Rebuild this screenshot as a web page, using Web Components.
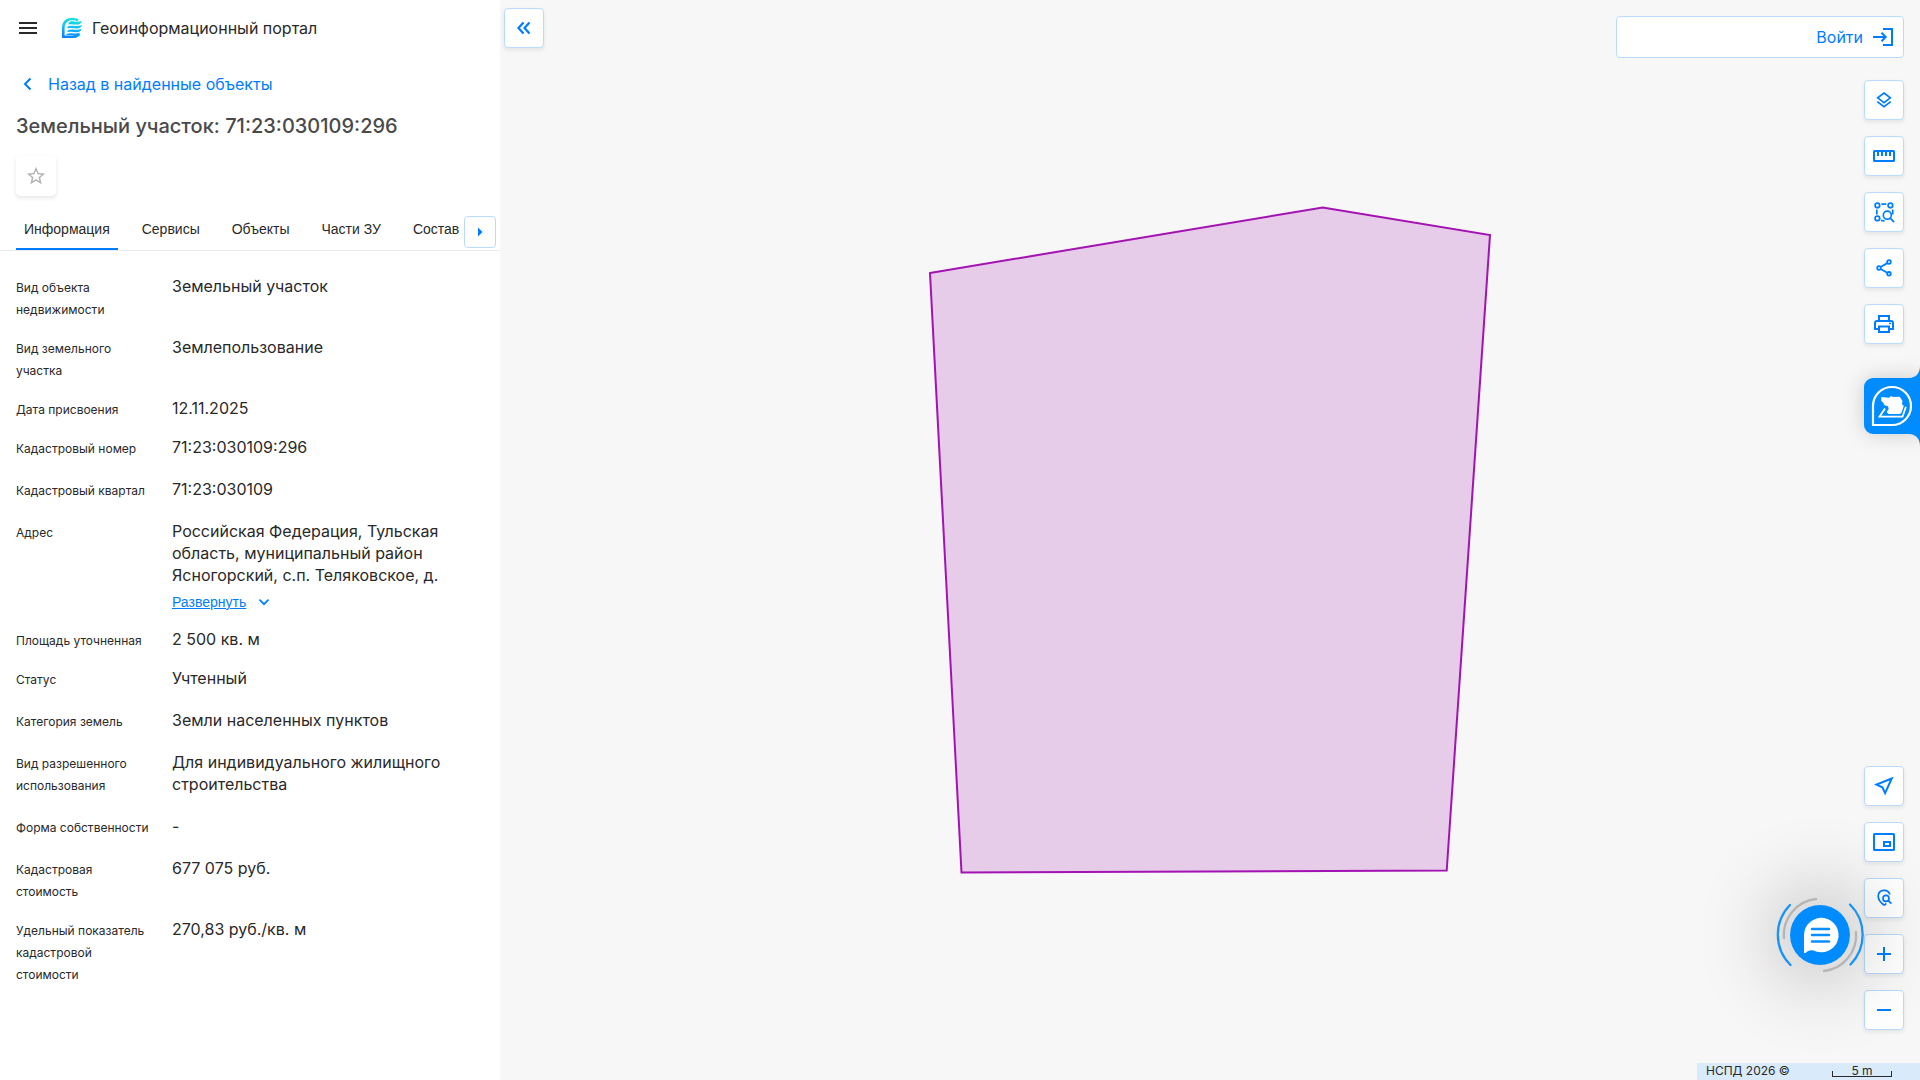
<!DOCTYPE html>
<html lang="ru">
<head>
<meta charset="utf-8">
<title>Геоинформационный портал</title>
<style>
  html, body { margin: 0; height: 100%; }
  body { font: 16px/22px Inter, "Liberation Sans", sans-serif; color: #292929; background: #f7f7f7; }
</style>
</head>
<body>
<gp-app>
  <gp-panel slot="panel">
    <gp-field label="Вид объекта недвижимости">Земельный участок</gp-field>
    <gp-field label="Вид земельного участка">Землепользование</gp-field>
    <gp-field label="Дата присвоения">12.11.2025</gp-field>
    <gp-field label="Кадастровый номер" roomy>71:23:030109:296</gp-field>
    <gp-field label="Кадастровый квартал" roomy>71:23:030109</gp-field>
    <gp-field label="Адрес">Российская Федерация, Тульская область, муниципальный район Ясногорский, с.п. Теляковское, д.<gp-expand slot="more">Развернуть</gp-expand></gp-field>
    <gp-field label="Площадь уточненная">2 500 кв. м</gp-field>
    <gp-field label="Статус" roomy>Учтенный</gp-field>
    <gp-field label="Категория земель" roomy>Земли населенных пунктов</gp-field>
    <gp-field label="Вид разрешенного использования" roomy>Для индивидуального жилищного строительства</gp-field>
    <gp-field label="Форма собственности" roomy>-</gp-field>
    <gp-field label="Кадастровая стоимость">677 075 руб.</gp-field>
    <gp-field label="Удельный показатель кадастровой стоимости">270,83 руб./кв. м</gp-field>
  </gp-panel>
  <gp-map slot="map"></gp-map>
</gp-app>

<script>
const icons = {
  collapse: '<path d="M11.5 6.5 6.5 12l5 5.5M17.5 6.5l-5 5.5 5 5.5" stroke-width="2.2"/>',
  next: '<path d="M10 7.500l4.500 4.500-4.500 4.500z" fill="currentColor" stroke="none"/>',
  star: '<path fill="currentColor" stroke="none" d="M22 9.24l-7.19-.62L12 2 9.19 8.63 2 9.24l5.46 4.73L5.82 21 12 17.27 18.18 21l-1.63-7.03L22 9.24zM12 15.4l-3.76 2.27 1-4.28-3.32-2.88 4.38-.38L12 6.1l1.71 4.04 4.38.38-3.32 2.88 1 4.28L12 15.4z"/>',
  layers: '<path d="M12 5l6.3 4.8-6.3 4.9-6.3-4.9zM5.2 13.6l6.8 5.2 6.8-5.2" stroke-width="1.7"/>',
  ruler: '<rect x="2" y="7" width="20" height="10" rx=".6"/><path d="M6 7v5M10 7v5M14 7v5M18 7v5"/>',
  area: '<g stroke-width="1.7"><circle cx="5.4" cy="5.4" r="2.3"/><circle cx="18.4" cy="5.4" r="2.3"/><circle cx="5.4" cy="18.4" r="2.3"/><path d="M9.3 4.2h5M4.8 9.5v5M9 20.3l3.6.7M20.7 9.4v5"/><circle cx="15.3" cy="15.2" r="4"/><path d="M18.2 18.2l3.9 4"/></g>',
  share: '<g stroke-width="1.8"><circle cx="17" cy="6" r="1.8"/><circle cx="7" cy="12" r="1.8"/><circle cx="17" cy="17.8" r="1.8"/><path d="M8.6 11l6.700-3.900M8.600 13l6.700 3.800"/></g>',
  print: '<path d="M7 8V4h10v4M6.500 17H3v-6a2 2 0 0 1 2-2h14a2 2 0 0 1 2 2v6h-3.500M7 14.500h10V20H7z"/><path d="M17 11.500h2" stroke-width="1.500"/>',
  locate: '<path d="M19.700 4.500 4.500 10.600l5.900 2.700 2.700 5.900z"/>',
  overview: '<rect x="2" y="4" width="20" height="16" rx=".6"/><path d="M12 12h6v4h-6z"/>',
  find: '<g stroke-width="1.700"><path d="M12.400 19.300C8.700 16.700 6.200 13.600 6.200 10.200a6 6 0 0 1 11.700-1.700M14.200 17.400l-1.800 1.900"/><circle cx="14" cy="12.400" r="3"/><path d="M16.200 14.700l3.300 3"/></g>',
  plus: '<path d="M5 12h14M12 5v14"/>',
  minus: '<path d="M5 12h14"/>',
  menu: '<path d="M3 7h18M3 12h18M3 17h18" stroke-width="2"/>',
  back: '<path d="M14.500 6.500 9 12l5.500 5.500"/>',
  down: '<path d="M7.500 9.700l4.500 4.500 4.500-4.500" stroke-width="1.700"/>',
  login: '<path d="M11 4h9v16h-9M1 12h12.500M9.500 7.800l4.200 4.200-4.200 4.200"/>'
};
const svg = (name, size = 24) =>
  `<svg width="${size}" height="${size}" viewBox="0 0 24 24" fill="none" stroke="currentColor" stroke-width="2" aria-hidden="true">${icons[name]}</svg>`;

class Base extends HTMLElement {
  connectedCallback() {
    if (this.shadowRoot) return;
    this.attachShadow({ mode: 'open' }).innerHTML =
      `<style>*{box-sizing:border-box} svg{display:block} button{font:inherit;margin:0;padding:0;border:0;background:none;color:inherit;cursor:pointer} a{color:#007dff}</style>` + this.render();
  }
}

customElements.define('gp-app', class extends Base {
  render() {
    return `<style>
      :host { display: flex; min-height: 100vh; }
      ::slotted([slot=panel]) { flex: 0 0 500px; min-width: 0; }
      ::slotted([slot=map]) { flex: 1; }
    </style><slot name="panel"></slot><slot name="map"></slot>`;
  }
});

customElements.define('gp-icon-button', class extends Base {
  render() {
    const size = this.hasAttribute('small') ? 32 : 40;
    return `<style>
      :host { display: block; flex: none; width: ${size}px; height: ${size}px; }
      button { display: flex; align-items: center; justify-content: center; width: 100%; height: 100%;
        background: #fff; color: #007dff; border: 1px solid #b8dbff; border-radius: 4px;
        box-shadow: 0 2px 4px rgba(0,0,0,.08); }
      :host([plain]) button { border-color: #fff; color: #b3b3b3; box-shadow: 0 2px 4px rgba(0,0,0,.1); }
      :host([small]) button { box-shadow: none; }
    </style><button type="button" aria-label="${this.getAttribute('label')}">${svg(this.getAttribute('icon'), this.hasAttribute('plain') ? 22 : 24)}</button>`;
  }
});

customElements.define('gp-logo', class extends Base {
  render() {
    return `<style>:host { display: block; }</style>
    <svg width="22" height="22" viewBox="0 0 22 22" fill="none" aria-hidden="true">
      <defs><linearGradient id="g" x1="13" y1="0" x2="8" y2="22" gradientUnits="userSpaceOnUse">
        <stop offset="0" stop-color="#1de9d2"/><stop offset=".5" stop-color="#12bdf5"/><stop offset="1" stop-color="#0a7bff"/></linearGradient></defs>
      <path d="M17 3.500C14.500 1.600 9 1.200 5.700 3.600 2.600 5.800 2.300 8.500 2.300 11v8.700h9.200c3 0 5.200-.8 7-2.900" stroke="url(#g)" stroke-width="2.600"/>
      <path d="M7.500 6.100C9 4.300 10.500 4.200 13 4.500c3 .4 5.500.2 8-.5-.8 2.500-2.500 3.600-5 3.600-3 0-5.500-.8-8.500-.1zM6.500 9.800c2.500-1.700 5-1 7.500-.8 2.600.2 4.800-.1 7-1-.6 2.400-2.400 3.600-5 3.600-3 0-6-1-9.500-.1zM6.500 13.500c2.500-1.500 5-.9 7.500-.7 2.600.2 4.400-.1 6.600-1-.7 2.400-2.300 3.500-4.700 3.500-3 0-6-.9-9.400-.1zM5.500 17c3-1.300 5.500-.8 7.500-.6 2 .2 4 0 6-.9-1 2-2.500 2.900-4.500 2.900-3 0-6-.7-9-.1z" fill="url(#g)"/>
    </svg>`;
  }
});

customElements.define('gp-expand', class extends Base {
  render() {
    return `<style>
      :host { display: flex; align-items: center; gap: 6px; margin-top: 5px; height: 22px;
        font: 14px/22px "Liberation Sans", sans-serif; color: #007dff; }
    </style><a href="#"><slot></slot></a>${svg('down')}`;
  }
});

customElements.define('gp-field', class extends Base {
  render() {
    return `<style>
      :host { display: block; margin-bottom: 15px; }
      :host([roomy]) { margin-bottom: 18px; }
      dl { display: grid; grid-template-columns: 136px 1fr; column-gap: 20px; align-items: baseline; margin: 0; }
      dt { font-size: 12px; line-height: 22px; }
      dd { margin: 0; }
    </style><dl><dt>${this.getAttribute('label')}</dt><dd><slot></slot><slot name="more"></slot></dd></dl>`;
  }
});

customElements.define('gp-tabs', class extends Base {
  render() {
    const tabs = ['Информация', 'Сервисы', 'Объекты', 'Части ЗУ', 'Состав'];
    return `<style>
      :host { display: flex; align-items: center; justify-content: space-between; height: 43px;
        padding: 0 4px 0 16px; border-bottom: 1px solid #ebebeb; font: 14px/20px "Liberation Sans", sans-serif; }
      div { display: flex; gap: 16px; align-self: stretch; min-width: 0; overflow: hidden; }
      button { padding: 0 8px; white-space: nowrap; }
      button[aria-selected=true] { box-shadow: inset 0 -2px #007dff; }
      gp-icon-button { margin-top: 6px; }
    </style><div role="tablist">${tabs.map((t, i) =>
      `<button type="button" role="tab" aria-selected="${i === 0}">${t}</button>`).join('')}</div>
    <gp-icon-button small icon="next" label="Следующие вкладки"></gp-icon-button>`;
  }
});

customElements.define('gp-panel', class extends Base {
  render() {
    return `<style>
      :host { display: block; background: #fff; }
      header { display: flex; align-items: center; height: 56px; padding: 0 16px; }
      gp-logo { margin: 0 9px 0 21px; }
      .back { display: flex; align-items: center; gap: 8px; margin: 16px 16px 0; height: 24px; text-decoration: none; }
      h1 { margin: 16px 16px 0; font-size: 20px; line-height: 28px; font-weight: 500; color: #4a4a4a; }
      gp-icon-button { margin: 16px 16px 12px; }
      .fields { padding: 24px 16px 0; }
    </style>
    <header><button type="button" aria-label="Меню">${svg('menu')}</button><gp-logo></gp-logo><span>Геоинформационный портал</span></header>
    <a class="back" href="#">${svg('back')}<span>Назад в найденные объекты</span></a>
    <h1>Земельный участок: 71:23:030109:296</h1>
    <gp-icon-button plain icon="star" label="В избранное"></gp-icon-button>
    <gp-tabs></gp-tabs>
    <div class="fields"><slot></slot></div>`;
  }
});

customElements.define('gp-login', class extends Base {
  render() {
    return `<style>
      :host { display: block; width: 288px; }
      button { display: flex; align-items: center; justify-content: flex-end; gap: 9px; width: 100%; height: 42px;
        padding: 0 7px; background: #fff; color: #007dff; border: 1px solid #b8dbff; border-radius: 4px; }
    </style><button type="button"><span>Войти</span>${svg('login')}</button>`;
  }
});

customElements.define('gp-toolbar', class extends Base {
  render() {
    return `<style>:host { display: flex; flex-direction: column; gap: 16px; }</style><slot></slot>`;
  }
});

customElements.define('gp-assistant', class extends Base {
  render() {
    return `<style>
      :host { display: block; filter: drop-shadow(0 0 10px rgba(0,0,0,.18)); }
      button { display: block; }
    </style><button type="button" aria-label="Помощник">
    <svg width="56" height="80" viewBox="0 0 56 80" fill="none">
      <path d="M56 0v80c0-7-4-12-11-12H9a9 9 0 0 1-9-9V21a9 9 0 0 1 9-9h36c7 0 11-5 11-12z" fill="#008cff"/>
      <path d="M9 59V40a19 19 0 1 1 19 19z" stroke="#fff" stroke-width="2.200"/>
      <path d="M17.300 31l8 .8 1.400-1.800 2.600 1 6.500-.2 2.700 4.200-.5 3 1.200 1.700-2.900 8.200H24.500L22.600 46l2.100-3-.7-2.800-3.400-1-1.500-2.700-1.800-1.500z" fill="#fff"/>
      <path d="M21 42.500 15.500 50.700h23l3.400-10" stroke="#fff" stroke-width="1.800"/>
      <path d="M39.200 39.500l-2.700 7.500" stroke="#fff" stroke-width="1.500"/>
    </svg></button>`;
  }
});

customElements.define('gp-chat', class extends Base {
  render() {
    return `<style>
      :host { display: block; width: 88px; height: 88px; }
      button { display: block; width: 88px; height: 88px; position: relative; }
      button::before { content: ""; position: absolute; inset: 14px; border-radius: 50%;
        box-shadow: 0 0 80px 16px rgba(0,0,0,.24); }
      svg { position: relative; }
    </style><button type="button" aria-label="Открыть чат">
    <svg width="88" height="88" viewBox="-44 -44 88 88" fill="none" stroke-linecap="round">
      <circle r="30" fill="#008cff"/>
      <path d="M-30-30a42.500 42.500 0 0 0 .5 60M30-30.500a42.500 42.500 0 0 1 .5 60" stroke="#1b93f5" stroke-width="2.300"/>
      <path d="M-4-36a36 36 0 0 0-32 39M36-3A36 36 0 0 1 4 36" stroke="#b5b5b5" stroke-width="2.300"/>
      <path d="M-16 18V0a17.300 17.300 0 1 1 9.500 15.500C-9.500 14.700-12 15.500-14.500 18z" fill="#fff"/>
      <path d="M-8-6H9M-8 0H9M-8 6.500H9" stroke="#0a8fff" stroke-width="2.500"/>
    </svg></button>`;
  }
});

customElements.define('gp-scale', class extends Base {
  render() {
    return `<style>
      :host { display: flex; align-items: flex-start; justify-content: space-between; width: 223px; height: 17px;
        padding: 0 28px 0 9px; box-sizing: border-box; background: #d9ebfa; font-size: 12px; line-height: 15px; }
      .bar { position: relative; width: 60px; text-align: center; }
      .bar::after { content: ""; position: absolute; inset: auto 0 1px; height: 6px; box-sizing: border-box;
        border: solid #292929; border-width: 0 1px 1px; }
    </style><span>НСПД 2026 ©</span><span class="bar">5 m</span>`;
  }
});

customElements.define('gp-map', class extends Base {
  render() {
    const tool = (icon, label) => `<gp-icon-button icon="${icon}" label="${label}"></gp-icon-button>`;
    return `<style>
      :host { display: block; position: relative; background: #f7f7f7; overflow: hidden; }
      .canvas { position: absolute; inset: 0; width: 100%; height: 100%; }
      .controls { position: absolute; inset: 16px 16px 50px auto; display: flex; flex-direction: column;
        align-items: flex-end; gap: 22px; }
      .lower { margin-top: auto; }
      .collapse { position: absolute; left: 4px; top: 8px; }
      gp-assistant { position: absolute; right: 0; top: 366px; }
      gp-chat { position: absolute; right: 56px; bottom: 101px; }
      gp-scale { position: absolute; right: 0; bottom: 0; }
    </style>
    <svg class="canvas" viewBox="0 0 1420 1080" role="img" aria-label="Карта участка">
      <path d="M430 273 822.700 207.500 990 235 946.700 870.500 461.500 872.500z" fill="#e6cce8" stroke="#a312b3" stroke-width="2"/>
    </svg>
    <gp-icon-button class="collapse" icon="collapse" label="Свернуть панель"></gp-icon-button>
    <div class="controls">
      <gp-login></gp-login>
      <gp-toolbar>${tool('layers', 'Слои')}${tool('ruler', 'Измерения')}${tool('area', 'Поиск по области')}${tool('share', 'Поделиться')}${tool('print', 'Печать')}</gp-toolbar>
      <gp-toolbar class="lower">${tool('locate', 'Моё местоположение')}${tool('overview', 'Обзорная карта')}${tool('find', 'Поиск по координатам')}${tool('plus', 'Приблизить')}${tool('minus', 'Отдалить')}</gp-toolbar>
    </div>
    <gp-assistant></gp-assistant>
    <gp-chat></gp-chat>
    <gp-scale></gp-scale>`;
  }
});
</script>
</body>
</html>
